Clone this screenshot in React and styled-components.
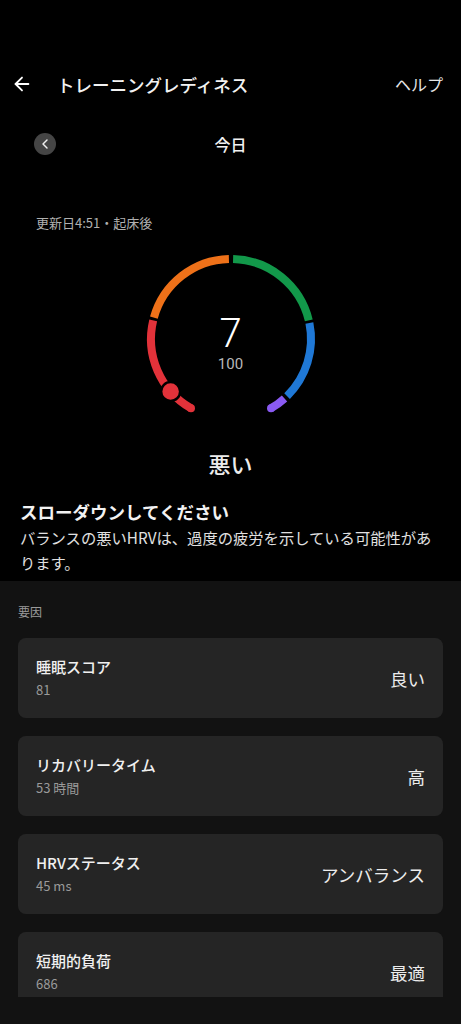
import styled, { createGlobalStyle } from "styled-components"
import { ArrowLeft, ChevronLeft } from "lucide-react"

const GlobalStyle = createGlobalStyle`
  html, body {
    margin: 0;
    padding: 0;
    background: #000000;
    font-family: 'Noto Sans CJK JP', 'Noto Sans', Roboto, sans-serif;
    color: #ffffff;
  }
`

const fatores = [
  { titulo: "睡眠スコア", sub: "81", valor: "良い" },
  { titulo: "リカバリータイム", sub: "53 時間", valor: "高" },
  { titulo: "HRVステータス", sub: "45 ms", valor: "アンバランス" },
  { titulo: "短期的負荷", sub: "686", valor: "最適" },
]

const CX = 100
const CY = 100
const R = 80

function ponto(ang) {
  const rad = (ang * Math.PI) / 180
  return [CX + R * Math.sin(rad), CY - R * Math.cos(rad)]
}

function arco(a1, a2) {
  const [x1, y1] = ponto(a1)
  const [x2, y2] = ponto(a2)
  let span = a2 - a1
  if (span < 0) span += 360
  const grande = span > 180 ? 1 : 0
  return `M ${x1} ${y1} A ${R} ${R} 0 ${grande} 1 ${x2} ${y2}`
}

const segmentos = [
  { de: 210, ate: 283.5, cor: "#e2323a", capInicio: true },
  { de: 285.5, ate: 358.5, cor: "#ee7119" },
  { de: 1.5, ate: 76.5, cor: "#12984a" },
  { de: 78.5, ate: 135.5, cor: "#1f78d6" },
  { de: 138, ate: 150, cor: "#8a5af2", capFim: true },
]

function Gauge() {
  const [mx, my] = ponto(229)
  return (
    <GaugeBox>
      <svg width="200" height="200" viewBox="0 0 200 200">
        {segmentos.map((s) => (
          <path key={s.cor} d={arco(s.de, s.ate)} stroke={s.cor} strokeWidth="8" fill="none" />
        ))}
        {segmentos.filter((s) => s.capInicio).map((s) => {
          const [x, y] = ponto(s.de)
          return <circle key="ci" cx={x} cy={y} r="4" fill={s.cor} />
        })}
        {segmentos.filter((s) => s.capFim).map((s) => {
          const [x, y] = ponto(s.ate)
          return <circle key="cf" cx={x} cy={y} r="4" fill={s.cor} />
        })}
        <circle cx={mx} cy={my} r="9.5" fill="#e2323a" stroke="#000" strokeWidth="2.5" />
      </svg>
      <GaugeCentro>
        <Pontos>7</Pontos>
        <Maximo>100</Maximo>
      </GaugeCentro>
    </GaugeBox>
  )
}

export default function App() {
  return (
    <>
      <GlobalStyle />
      <Tela>
        <Rolagem>
          <Topo>
            <Cabecalho>
              <ArrowLeft size={22} strokeWidth={2} color="#fff" />
              <Titulo>トレーニングレディネス</Titulo>
              <Ajuda>ヘルプ</Ajuda>
            </Cabecalho>
            <LinhaData>
              <BotaoVoltar>
                <ChevronLeft size={16} strokeWidth={2.2} color="#eee" />
              </BotaoVoltar>
              <Data>今日</Data>
            </LinhaData>
            <Atualizado>更新日4:51・起床後</Atualizado>
            <Gauge />
            <Estado>悪い</Estado>
            <Conselho>
              <h2>スローダウンしてください</h2>
              <p>バランスの悪いHRVは、過度の疲労を示している可能性があります。</p>
            </Conselho>
          </Topo>
          <Secao>
            <Rotulo>要因</Rotulo>
            <Lista>
              {fatores.map((f) => (
                <Cartao key={f.titulo}>
                  <div>
                    <CartaoTitulo>{f.titulo}</CartaoTitulo>
                    <CartaoSub>{f.sub}</CartaoSub>
                  </div>
                  <CartaoValor>{f.valor}</CartaoValor>
                </Cartao>
              ))}
            </Lista>
          </Secao>
        </Rolagem>
        <Rodape />
      </Tela>
    </>
  )
}

const Tela = styled.div`
    width: 461px;
    height: 1024px;
    display: flex;
    flex-direction: column;
    background: #121212;
    overflow: hidden;
`
const Rolagem = styled.div`
    height: 997px;
    overflow: hidden;
    flex-shrink: 0;
`
const Rodape = styled.div`
    flex: 1;
    background: #121212;
`
const Topo = styled.div`
    background: #000000;
    padding: 60px 0 6px;
    display: flex;
    flex-direction: column;
`
const Cabecalho = styled.div`
    height: 48px;
    display: flex;
    align-items: center;
    padding: 0 18px 0 11px;
    svg{
        flex-shrink: 0;
    }
`
const Titulo = styled.h1`
    margin: 0 0 0 24px;
    flex: 1;
    font-size: 17.5px;
    font-weight: 500;
    color: #f2f2f2;
`
const Ajuda = styled.span`
    font-size: 16px;
    color: #e6e6e6;
`
const LinhaData = styled.div`
    margin-top: 16px;
    height: 40px;
    display: flex;
    align-items: center;
    justify-content: center;
    position: relative;
`
const BotaoVoltar = styled.div`
    position: absolute;
    left: 34px;
    top: 9px;
    width: 22px;
    height: 22px;
    border-radius: 50%;
    background: #454545;
    display: flex;
    align-items: center;
    justify-content: center;
`
const Data = styled.span`
    font-size: 16px;
    font-weight: 500;
    color: #f2f2f2;
`
const Atualizado = styled.p`
    margin: 49px 0 0 36px;
    font-size: 13px;
    line-height: 20px;
    color: #b0b0b0;
`
const GaugeBox = styled.div`
    margin: 6px auto 0;
    width: 200px;
    height: 200px;
    position: relative;
`
const GaugeCentro = styled.div`
    position: absolute;
    inset: 0;
    display: flex;
    flex-direction: column;
    align-items: center;
    justify-content: center;
    padding-top: 8px;
    box-sizing: border-box;
`
const Pontos = styled.span`
    font-family: Roboto, sans-serif;
    font-weight: 300;
    font-size: 40px;
    line-height: 42px;
    color: #ffffff;
`
const Maximo = styled.span`
    font-family: Roboto, sans-serif;
    font-size: 15px;
    line-height: 18px;
    color: #b8b8b8;
`
const Estado = styled.div`
    margin-top: 8px;
    text-align: center;
    font-size: 22px;
    line-height: 32px;
    font-weight: 500;
    color: #ececec;
`
const Conselho = styled.div`
    margin-top: 20px;
    padding: 0 18px 0 20px;
    h2{
        margin: 0;
        font-size: 17.5px;
        line-height: 26px;
        font-weight: 700;
        color: #f2f2f2;
    }
    p{
        margin: 0;
        font-size: 15.3px;
        line-height: 25px;
        color: #e0e0e0;
    }
`
const Secao = styled.div`
    background: #121212;
    padding: 22px 18px 0;
`
const Rotulo = styled.div`
    font-size: 12px;
    line-height: 18px;
    color: #9a9a9a;
`
const Lista = styled.div`
    margin-top: 17px;
    display: flex;
    flex-direction: column;
    gap: 18px;
`
const Cartao = styled.div`
    height: 80px;
    box-sizing: border-box;
    background: #252525;
    border-radius: 8px;
    padding: 0 18px;
    display: flex;
    align-items: center;
    justify-content: space-between;
`
const CartaoTitulo = styled.div`
    font-size: 15px;
    line-height: 22px;
    font-weight: 500;
    color: #f0f0f0;
`
const CartaoSub = styled.div`
    font-size: 13px;
    line-height: 20px;
    color: #9a9a9a;
    margin-top: 2px;
`
const CartaoValor = styled.div`
    font-size: 17.5px;
    color: #ececec;
`
